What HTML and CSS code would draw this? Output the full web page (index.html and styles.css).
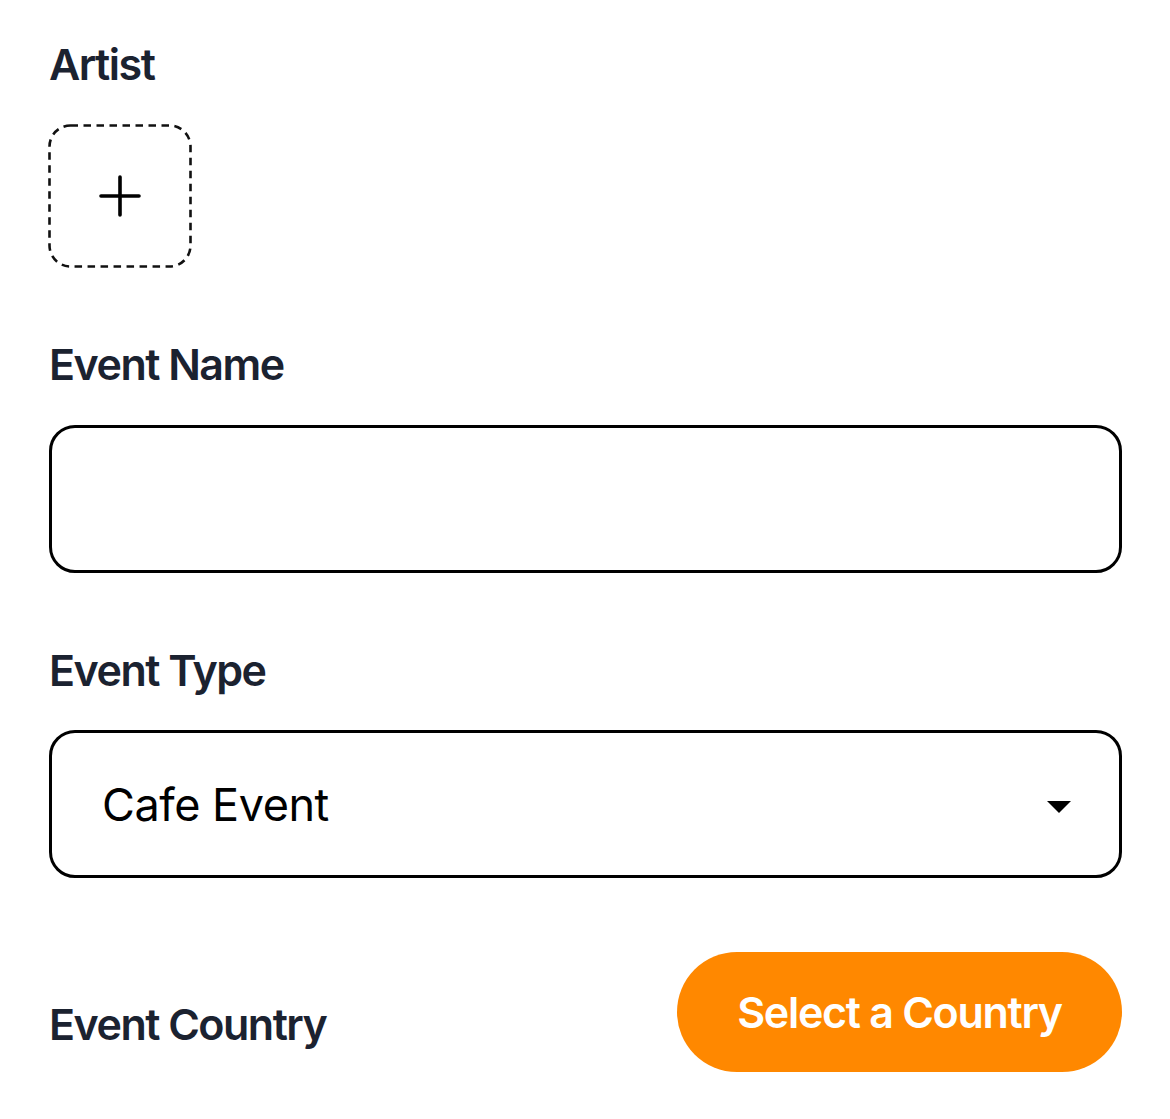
FILE: index.html
```html
<!DOCTYPE html>
<html lang="en">
<head>
<meta charset="utf-8">
<title>Create Event</title>
<link rel="stylesheet" href="styles.css">
</head>
<body>
<form class="form">
  <div class="label">Artist</div>
  <button type="button" class="add-box" aria-label="Add artist">
    <svg class="add-svg" width="144" height="144" viewBox="0 0 144 144">
      <rect x="1.5" y="1.5" width="141" height="141" rx="21" ry="21" fill="none" stroke="#111" stroke-width="2.6" stroke-dasharray="7.5 5.5"/>
      <path d="M72 53v38M53 72h38" stroke="#000" stroke-width="3.6" stroke-linecap="round" fill="none"/>
    </svg>
  </button>

  <div class="label label-gap">Event Name</div>
  <div class="field"></div>

  <div class="label label-gap label-gap-type">Event Type</div>
  <div class="field select">
    <span class="select-value">Cafe Event</span>
    <svg class="caret" width="24" height="12" viewBox="0 0 24 12"><path d="M0 0h24L12 12z" fill="#000"/></svg>
  </div>

  <div class="country-row">
    <div class="label country-label">Event Country</div>
    <button type="button" class="country-btn">Select a Country</button>
  </div>
</form>
</body>
</html>
```

FILE: styles.css
```css
html, body {
  margin: 0;
  padding: 0;
  background: #fff;
}
body {
  font-family: Inter, "Noto Sans", sans-serif;
}
.form {
  padding: 38px 48px 0 49px;
  display: flex;
  flex-direction: column;
}
.label {
  font-size: 43px;
  line-height: 52px;
  font-weight: 600;
  color: #1b2230;
  letter-spacing: -0.035em;
}
.label-gap {
  margin-top: 70px;
}
.label-gap-type {
  margin-top: 71px;
}
.add-box {
  margin-top: 34px;
  margin-left: -1px;
  width: 144px;
  height: 144px;
  border: none;
  background: transparent;
  padding: 0;
  display: block;
}
.add-svg {
  display: block;
}
.field {
  margin-top: 35px;
  height: 148px;
  box-sizing: border-box;
  border: 3px solid #000;
  border-radius: 26px;
  width: 1073px;
}
.select {
  display: flex;
  align-items: center;
  justify-content: space-between;
  padding: 0 48px 0 50px;
  margin-top: 34px;
}
.select-value {
  font-size: 45px;
  color: #000;
  font-weight: 400;
  letter-spacing: -0.01em;
}
.caret {
  margin-top: 6px;
}
.country-row {
  margin-top: 74px;
  display: flex;
  justify-content: space-between;
  align-items: flex-start;
  width: 1073px;
}
.country-label {
  margin-top: 46px;
}
.country-btn {
  width: 445px;
  height: 120px;
  border: none;
  border-radius: 60px;
  background: #ff8800;
  color: #fff;
  font-family: Inter, "Noto Sans", sans-serif;
  font-size: 43px;
  font-weight: 600;
  letter-spacing: -0.03em;
  padding: 0;
}
```
